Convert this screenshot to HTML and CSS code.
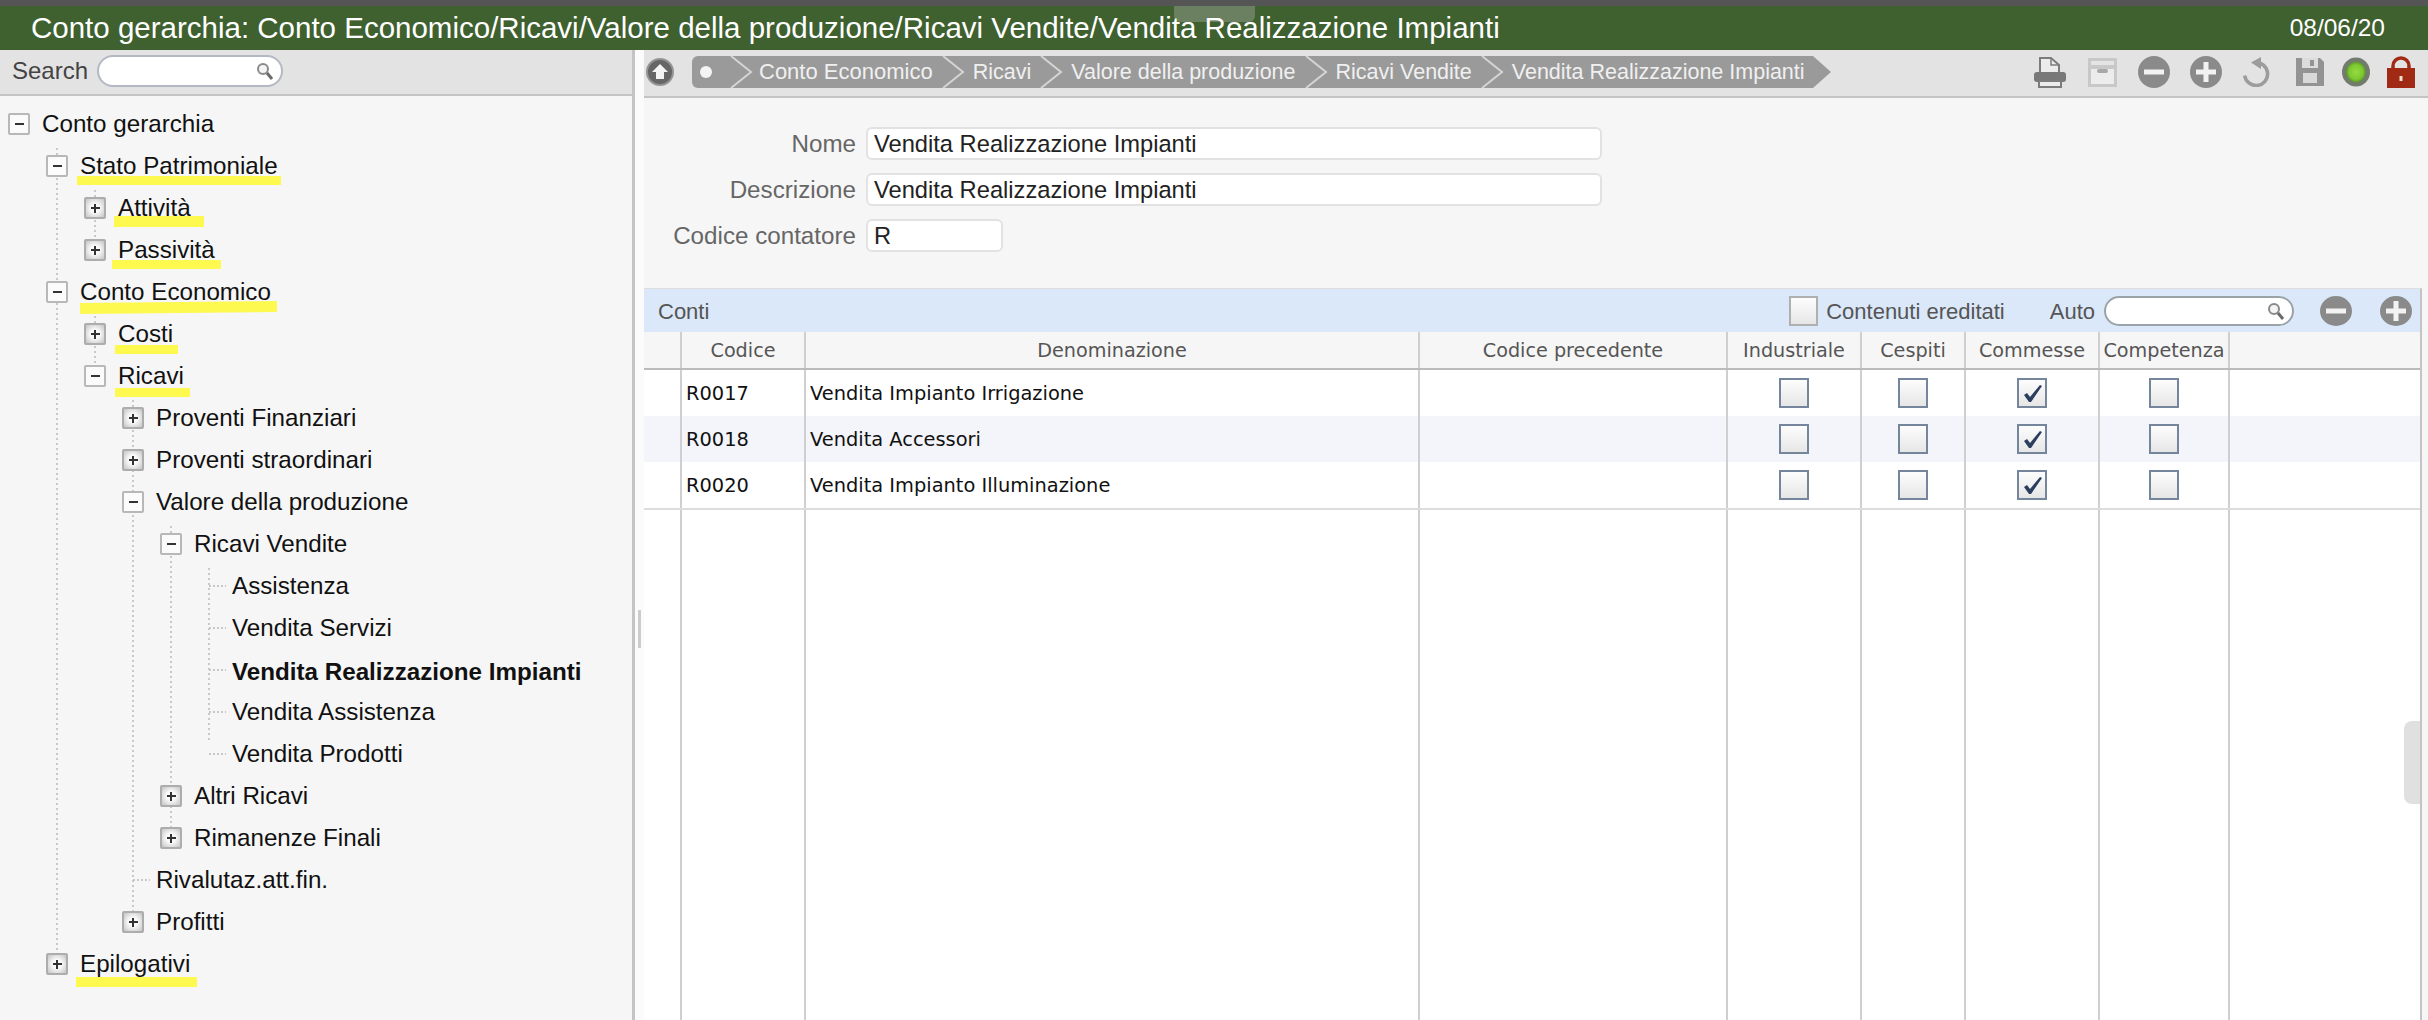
FILE: index.html
```html
<!DOCTYPE html>
<html lang="it">
<head>
    <meta charset="UTF-8">
    <title>Conto gerarchia</title>
    <link rel="stylesheet" href="styles.css">
</head>
<body>

<div class="app">
    <div class="titlebar">
        <div class="title">Conto gerarchia: Conto Economico/Ricavi/Valore della produzione/Ricavi Vendite/Vendita Realizzazione Impianti</div>
        <div class="date">08/06/20</div>
        <div class="drag-handle"></div>
    </div>

    <div class="main">
        <div class="left-pane">
            <div class="search-bar">
                <span class="search-label">Search</span>
                <div class="search-box">
                    <svg width="18" height="20" viewBox="0 0 18 20"><circle cx="7" cy="8" r="5" fill="#f4f4f4" stroke="#8a8a8a" stroke-width="2"/><path d="M11 12l5 6" stroke="#6a6a6a" stroke-width="3"/></svg>
                </div>
            </div>
            <div class="tree">
                <div class="row"><span class="tg"></span><span class="lbl">Conto gerarchia</span></div>
                <ul class="sub">
                    <li>
                        <div class="row"><span class="tg"></span><span class="lbl hl">Stato Patrimoniale</span></div>
                        <ul class="sub">
                            <li><div class="row"><span class="tg plus"></span><span class="lbl hl hl-attivita">Attività</span></div></li>
                            <li><div class="row"><span class="tg plus"></span><span class="lbl hl hl-passivita">Passività</span></div></li>
                        </ul>
                    </li>
                    <li>
                        <div class="row"><span class="tg"></span><span class="lbl hl hl-economico">Conto Economico</span></div>
                        <ul class="sub short">
                            <li><div class="row"><span class="tg plus"></span><span class="lbl hl hl-costi">Costi</span></div></li>
                            <li>
                                <div class="row"><span class="tg"></span><span class="lbl hl hl-ricavi">Ricavi</span></div>
                                <ul class="sub">
                                    <li><div class="row"><span class="tg plus"></span><span class="lbl">Proventi Finanziari</span></div></li>
                                    <li><div class="row"><span class="tg plus"></span><span class="lbl">Proventi straordinari</span></div></li>
                                    <li>
                                        <div class="row"><span class="tg"></span><span class="lbl">Valore della produzione</span></div>
                                        <ul class="sub">
                                            <li>
                                                <div class="row"><span class="tg"></span><span class="lbl">Ricavi Vendite</span></div>
                                                <ul class="sub">
                                                    <li><div class="row"><span class="stub"></span><span class="lbl">Assistenza</span></div></li>
                                                    <li><div class="row"><span class="stub"></span><span class="lbl">Vendita Servizi</span></div></li>
                                                    <li><div class="row"><span class="stub"></span><span class="lbl current">Vendita Realizzazione Impianti</span></div></li>
                                                    <li><div class="row"><span class="stub"></span><span class="lbl">Vendita Assistenza</span></div></li>
                                                    <li><div class="row"><span class="stub"></span><span class="lbl">Vendita Prodotti</span></div></li>
                                                </ul>
                                            </li>
                                            <li><div class="row"><span class="tg plus"></span><span class="lbl">Altri Ricavi</span></div></li>
                                            <li><div class="row"><span class="tg plus"></span><span class="lbl">Rimanenze Finali</span></div></li>
                                        </ul>
                                    </li>
                                    <li><div class="row"><span class="stub"></span><span class="lbl">Rivalutaz.att.fin.</span></div></li>
                                    <li><div class="row"><span class="tg plus"></span><span class="lbl">Profitti</span></div></li>
                                </ul>
                            </li>
                        </ul>
                    </li>
                    <li><div class="row"><span class="tg plus"></span><span class="lbl hl hl-epilogativi">Epilogativi</span></div></li>
                </ul>
            </div>
        </div>

        <div class="splitter"><div class="splitter-grip"></div></div>

        <div class="right-pane">
            <div class="toolbar">
                <svg class="up-icon" width="28" height="28" viewBox="0 0 28 28"><circle cx="14" cy="14" r="13" fill="#666666" stroke="#949494" stroke-width="2"/><path d="M14 6l8 8h-4v7h-8v-7H6z" fill="#f4f4f4"/></svg>
                <div class="crumbs">
                    <span class="crumb-dot"></span>
                    <svg class="chev first" width="24" height="32" viewBox="0 0 24 32"><path d="M1 0l20 16L1 32" fill="none" stroke="#d4d4d4" stroke-width="2"/></svg>
                    <span class="crumb c1">Conto Economico</span>
                    <svg class="chev" width="24" height="32" viewBox="0 0 24 32"><path d="M1 0l20 16L1 32" fill="none" stroke="#d4d4d4" stroke-width="2"/></svg>
                    <span class="crumb">Ricavi</span>
                    <svg class="chev" width="24" height="32" viewBox="0 0 24 32"><path d="M1 0l20 16L1 32" fill="none" stroke="#d4d4d4" stroke-width="2"/></svg>
                    <span class="crumb">Valore della produzione</span>
                    <svg class="chev" width="24" height="32" viewBox="0 0 24 32"><path d="M1 0l20 16L1 32" fill="none" stroke="#d4d4d4" stroke-width="2"/></svg>
                    <span class="crumb">Ricavi Vendite</span>
                    <svg class="chev" width="24" height="32" viewBox="0 0 24 32"><path d="M1 0l20 16L1 32" fill="none" stroke="#d4d4d4" stroke-width="2"/></svg>
                    <span class="crumb c5">Vendita Realizzazione Impianti</span>
                </div>
                <svg class="crumb-tip" width="18" height="32" viewBox="0 0 18 32"><path d="M0 0l18 16L0 32z" fill="#9a9a9a"/></svg>

                <div class="tools">
                    <svg width="32" height="32" viewBox="0 0 32 32"><path d="M6 17V2h11l8 7v8" fill="#ececec" stroke="#7c7c7c" stroke-width="2"/><path d="M17 2v7h8" fill="none" stroke="#7c7c7c" stroke-width="1.500"/><rect x="0" y="16" width="32" height="10" rx="3" fill="#787878"/><rect x="5" y="25" width="22" height="6" fill="#ececec" stroke="#7c7c7c" stroke-width="2"/></svg>
                    <svg class="tool-archive" width="29" height="30" viewBox="0 0 29 30"><rect x="0" y="1" width="29" height="29" fill="#c8c8c8"/><rect x="3" y="4" width="23" height="4" fill="#e4e4e4"/><rect x="3" y="12" width="23" height="15" fill="#ececec"/><rect x="9" y="12" width="11" height="4" rx="2" fill="#a8a8a8"/></svg>
                    <svg class="tool-minus" width="32" height="32" viewBox="0 0 32 32"><circle cx="16" cy="16" r="16" fill="#8a8a8a"/><rect x="6" y="13.500" width="20" height="5" fill="#f2f2f2"/></svg>
                    <svg class="tool-plus" width="32" height="32" viewBox="0 0 32 32"><circle cx="16" cy="16" r="16" fill="#8a8a8a"/><rect x="6" y="13.500" width="20" height="5" fill="#f2f2f2"/><rect x="13.500" y="6" width="5" height="20" fill="#f2f2f2"/></svg>
                    <svg class="tool-undo" width="28" height="30" viewBox="0 0 28 30"><path d="M13 5.500a11.500 11.500 0 1 1-11.300 13" fill="none" stroke="#9c9c9c" stroke-width="3.500"/><path d="M18 0v12L8 5.500z" fill="#9c9c9c"/></svg>
                    <svg class="tool-save" width="28" height="28" viewBox="0 0 28 28"><path d="M0 0h24l4 4v24H0z" fill="#939393"/><rect x="6" y="0" width="16" height="10" fill="#dcdcdc"/><rect x="14" y="2" width="4" height="6" fill="#939393"/><rect x="7" y="15" width="14" height="10" fill="#d8d8d8"/></svg>
                    <svg class="tool-led" width="28" height="30" viewBox="0 0 28 30"><defs><radialGradient id="led"><stop offset="0" stop-color="#96dc40"/><stop offset="0.700" stop-color="#7cc830"/><stop offset="1" stop-color="#5f8f32"/></radialGradient></defs><ellipse cx="14" cy="15" rx="14" ry="14.500" fill="#737a6e"/><ellipse cx="14" cy="15" rx="10" ry="10.500" fill="url(#led)"/></svg>
                    <svg class="tool-lock" width="28" height="32" viewBox="0 0 28 32"><path d="M6 14V10a8 8 0 0 1 16 0v4" fill="none" stroke="#a02a14" stroke-width="3.500"/><rect x="0" y="12" width="28" height="20" fill="#a02a14"/><rect x="12.500" y="20" width="3" height="5" fill="#f0e0d0"/></svg>
                </div>
            </div>

            <div class="form">
                <div class="form-row"><label>Nome</label><div class="field wide">Vendita Realizzazione Impianti</div></div>
                <div class="form-row"><label>Descrizione</label><div class="field wide">Vendita Realizzazione Impianti</div></div>
                <div class="form-row"><label>Codice contatore</label><div class="field short">R</div></div>
            </div>

            <div class="panel">
                <div class="panel-head">
                    <span class="panel-title">Conti</span>
                    <span class="cb large"></span>
                    <span class="panel-text">Contenuti ereditati</span>
                    <span class="panel-text auto">Auto</span>
                    <div class="auto-box">
                        <svg width="18" height="20" viewBox="0 0 18 20"><circle cx="7" cy="8" r="5" fill="#f4f4f4" stroke="#8a8a8a" stroke-width="2"/><path d="M11 12l5 6" stroke="#6a6a6a" stroke-width="3"/></svg>
                    </div>
                    <svg class="panel-btn" width="32" height="32" viewBox="0 0 32 32"><ellipse cx="16" cy="16" rx="16" ry="15" fill="#8a8a8a"/><rect x="6" y="13.500" width="20" height="5" fill="#f2f2f2"/></svg>
                    <svg class="panel-btn" width="32" height="32" viewBox="0 0 32 32"><ellipse cx="16" cy="16" rx="16" ry="15" fill="#8a8a8a"/><rect x="6" y="13.500" width="20" height="5" fill="#f2f2f2"/><rect x="13.500" y="6" width="5" height="20" fill="#f2f2f2"/></svg>
                </div>

                <div class="grid-row grid-head">
                    <div></div><div>Codice</div><div>Denominazione</div><div>Codice precedente</div><div>Industriale</div><div>Cespiti</div><div>Commesse</div><div>Competenza</div><div></div>
                </div>
                <div class="grid-row data">
                    <div></div><div class="txt">R0017</div><div class="txt">Vendita Impianto Irrigazione</div><div></div>
                    <div><span class="cb"></span></div><div><span class="cb"></span></div>
                    <div><span class="cb"><svg width="26" height="26" viewBox="0 0 26 26"><path d="M5 15l3-2 3 4L21 5l2 1-11 16h-2z" fill="#2c3e5e"/></svg></span></div>
                    <div><span class="cb"></span></div><div></div>
                </div>
                <div class="grid-row data alt">
                    <div></div><div class="txt">R0018</div><div class="txt">Vendita Accessori</div><div></div>
                    <div><span class="cb"></span></div><div><span class="cb"></span></div>
                    <div><span class="cb"><svg width="26" height="26" viewBox="0 0 26 26"><path d="M5 15l3-2 3 4L21 5l2 1-11 16h-2z" fill="#2c3e5e"/></svg></span></div>
                    <div><span class="cb"></span></div><div></div>
                </div>
                <div class="grid-row data">
                    <div></div><div class="txt">R0020</div><div class="txt">Vendita Impianto Illuminazione</div><div></div>
                    <div><span class="cb"></span></div><div><span class="cb"></span></div>
                    <div><span class="cb"><svg width="26" height="26" viewBox="0 0 26 26"><path d="M5 15l3-2 3 4L21 5l2 1-11 16h-2z" fill="#2c3e5e"/></svg></span></div>
                    <div><span class="cb"></span></div><div></div>
                </div>
                <div class="grid-row filler">
                    <div></div><div></div><div></div><div></div><div></div><div></div><div></div><div></div><div></div>
                </div>
                <div class="scroll-thumb"></div>
            </div>
        </div>
    </div>
</div>

</body>
</html>
```

FILE: styles.css
```css
* {
    box-sizing: border-box;
}
body {
    margin: 0;
    font-family: "Liberation Sans", Arial, sans-serif;
    background-color: #f6f6f6;
}
.app {
    display: flex;
    flex-direction: column;
    height: 100vh;
    overflow: hidden;
}

/* title bar */
.titlebar {
    position: relative;
    display: flex;
    justify-content: space-between;
    align-items: center;
    height: 50px;
    padding: 0 43px 0 31px;
    background-color: #3f602f;
    border-top: 6px solid #555555;
    color: #ffffff;
}
.title {
    position: relative;
    z-index: 1;
    font-size: 29.500px;
}
.date {
    font-size: 24.500px;
}
.drag-handle {
    position: absolute;
    top: 0;
    left: 1174px;
    width: 81px;
    height: 16px;
    background-color: #6b8060;
    border-radius: 0 0 6px 6px;
}

.main {
    display: flex;
    flex: 1;
    min-height: 0;
}

/* left tree */
.left-pane {
    display: flex;
    flex-direction: column;
    width: 635px;
    border-right: 3px solid #c4c4c4;
}
.search-bar {
    display: flex;
    align-items: center;
    gap: 9px;
    height: 46px;
    padding: 0 0 2px 12px;
    background-color: #e3e3e3;
    border-bottom: 2px solid #c4c4c4;
}
.search-label {
    font-size: 24px;
    color: #444444;
}
.search-box {
    display: flex;
    align-items: center;
    justify-content: flex-end;
    width: 186px;
    height: 32px;
    padding-right: 7px;
    background-color: #ffffff;
    border: 2px solid #b4b8c4;
    border-radius: 16px;
}
.tree {
    flex: 1;
    padding: 7px 0 0 7px;
    isolation: isolate;
    background-color: #f6f6f6;
}
.sub {
    position: relative;
    list-style: none;
    margin: 0;
    padding: 0 0 0 38px;
}
.sub::before {
    content: "";
    position: absolute;
    top: 3px;
    bottom: 32px;
    left: 49px;
    width: 2px;
    background: repeating-linear-gradient(#c8c8c8 0 2px, transparent 2px 5px);
}
.sub.short::before {
    bottom: auto;
    height: 50px;
}
.row {
    display: flex;
    align-items: center;
    gap: 11px;
    height: 42px;
}
.tg {
    position: relative;
    display: grid;
    place-items: center;
    width: 22px;
    height: 22px;
    margin: 0 1px;
    background-color: #fbfbfb;
    border: 2px solid #b8b8b8;
    border-radius: 2px;
}
.tg::before {
    content: "";
    grid-area: 1 / 1;
    width: 9px;
    height: 2.500px;
    background-color: #333333;
}
.tg.plus {
    background: radial-gradient(#fafafa 35%, #c4c4c4);
    border-color: #adadad;
}
.tg.plus::after {
    content: "";
    grid-area: 1 / 1;
    width: 2.500px;
    height: 9px;
    background-color: #333333;
}
.stub {
    width: 17px;
    height: 2px;
    margin: 0 -5px 0 12px;
    background: repeating-linear-gradient(90deg, #c8c8c8 0 2px, transparent 2px 4px);
}
.lbl {
    position: relative;
    font-size: 24.200px;
    line-height: 28px;
    color: #111111;
}
.lbl.current {
    font-weight: bold;
    padding-top: 3px;
}
.hl::after {
    content: "";
    position: absolute;
    top: 24px;
    left: -3px;
    right: -3px;
    height: 9px;
    background-color: #fdf94f;
    z-index: -1;
}
.hl-attivita::after {
    top: 22px;
    left: -4px;
    right: -13px;
    height: 11px;
}
.hl-passivita::after {
    left: -6px;
    right: -6px;
}
.hl-economico::after {
    top: 24px;
    left: 0;
    right: -6px;
    height: 11px;
    transform: rotate(-0.6deg);
}
.hl-costi::after {
    top: 25px;
    right: -5px;
}
.hl-ricavi::after {
    top: 26px;
    right: -6px;
}
.hl-epilogativi::after {
    top: 27px;
    left: -4px;
    right: -7px;
    height: 10px;
}

.splitter {
    display: flex;
    align-items: flex-start;
    justify-content: center;
    width: 9px;
    background-color: #fbfbfb;
}
.splitter-grip {
    width: 3px;
    height: 38px;
    margin-top: 560px;
    background-color: #cccccc;
}

/* right side */
.right-pane {
    display: flex;
    flex-direction: column;
    flex: 1;
    min-width: 0;
    background-color: #f6f6f6;
}
.toolbar {
    display: flex;
    align-items: center;
    height: 48px;
    padding: 0 13px 2px 2px;
    background-color: #e3e3e3;
    border-bottom: 2px solid #c4c4c4;
}
.up-icon {
    margin-right: 18px;
}
.crumbs {
    display: flex;
    align-items: center;
    height: 32px;
    padding-left: 8px;
    background-color: #9a9a9a;
    border-radius: 6px 0 0 6px;
}
.crumb-dot {
    width: 12px;
    height: 12px;
    background-color: #f4f4f4;
    border-radius: 50%;
}
.chev {
    margin: 0 7px 0 9px;
}
.chev.first {
    margin: 0 5px 0 18px;
}
.crumb {
    font-size: 21.500px;
    color: #f0f0f0;
    white-space: nowrap;
}
.crumb.c1 {
    font-size: 22px;
}
.crumb.c5 {
    margin-right: 8px;
}
.tools {
    display: flex;
    align-items: center;
    gap: 20px;
    margin-left: auto;
}
.tool-archive {
    margin-left: 2px;
}
.tool-minus,
.tool-undo {
    margin-left: 1px;
}
.tool-save {
    margin-left: 5px;
}
.tool-led {
    margin-left: -2px;
}
.tool-lock {
    margin-left: -3px;
}

.form {
    display: flex;
    flex-direction: column;
    gap: 13px;
    height: 190px;
    padding-top: 29px;
}
.form-row {
    display: flex;
    align-items: center;
    gap: 10px;
}
.form-row label {
    width: 212px;
    text-align: right;
    font-size: 24.200px;
    color: #666666;
}
.field {
    height: 33px;
    padding-left: 6px;
    background-color: #ffffff;
    border: 2px solid #e2e2e2;
    border-radius: 6px;
    font-size: 23.700px;
    line-height: 31px;
    color: #222222;
}
.field.wide {
    width: 736px;
}
.field.short {
    width: 137px;
}

/* conti panel */
.panel {
    position: relative;
    display: flex;
    flex-direction: column;
    flex: 1;
    min-height: 0;
    margin-right: 6px;
    border-top: 1px solid #dddddd;
    border-right: 2px solid #c4c4c4;
}
.panel-head {
    display: flex;
    align-items: center;
    height: 43px;
    padding-left: 14px;
    background-color: #dae8f9;
}
.panel-title {
    padding-top: 2px;
    font-size: 22px;
    color: #555555;
    margin-right: auto;
}
.panel-text {
    padding-top: 2px;
    font-size: 22px;
    color: #555555;
    margin-left: 8px;
}
.panel-text.auto {
    margin-left: 45px;
}
.auto-box {
    display: flex;
    align-items: center;
    justify-content: flex-end;
    width: 190px;
    height: 30px;
    margin-left: 9px;
    padding-right: 7px;
    background-color: #ffffff;
    border: 2px solid #9aa4a8;
    border-radius: 15px;
}
.panel-btn {
    margin-left: 26px;
}
.panel-btn:last-child {
    margin-left: 28px;
    margin-right: 8px;
}
.cb {
    display: inline-flex;
    align-items: center;
    justify-content: center;
    width: 30px;
    height: 30px;
    background: linear-gradient(#fdfdfd, #e6e6e6);
    border: 2px solid #75859b;
}
.cb.large {
    width: 29px;
    border-color: #b0b0b0;
}
.grid-row {
    display: grid;
    grid-template-columns: 38px 124px 614px 308px 134px 104px 134px 130px 1fr;
}
.grid-row > div {
    display: flex;
    align-items: center;
    justify-content: center;
    border-right: 2px solid #cfcfcf;
}
.grid-row > div:last-child {
    border-right: 0;
}
.grid-head {
    height: 38px;
    background-color: #f6f6f6;
    border-bottom: 2px solid #bbbbbb;
    font-family: "DejaVu Sans", sans-serif;
    font-size: 19.200px;
    color: #555555;
}
.data {
    height: 46px;
    background-color: #ffffff;
    font-family: "DejaVu Sans", sans-serif;
    font-size: 19.400px;
    color: #111111;
}
.data.alt {
    background-color: #f3f5fa;
}
.grid-row > div.txt {
    justify-content: flex-start;
    padding-left: 4px;
}
.filler {
    flex: 1;
    background-color: #ffffff;
    border-top: 2px solid #dddddd;
}
.scroll-thumb {
    position: absolute;
    top: 432px;
    right: 0;
    width: 16px;
    height: 83px;
    background-color: #e0e0e0;
    border-radius: 8px 0 0 8px;
}
```
